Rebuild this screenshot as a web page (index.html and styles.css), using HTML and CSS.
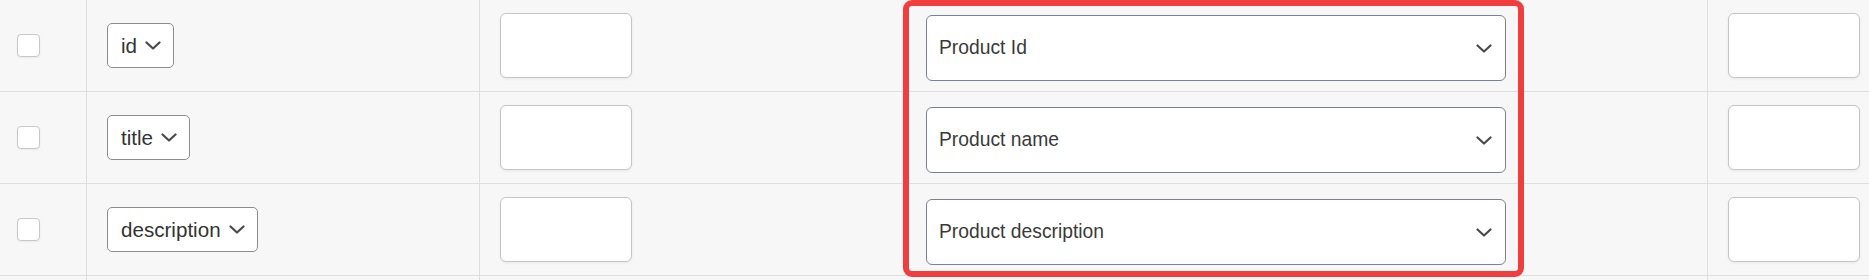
FILE: index.html
```html
<!DOCTYPE html>
<html lang="en">
<head>
    <meta charset="UTF-8">
    <meta name="viewport" content="width=device-width, initial-scale=1.0">
    <title>Field Mapping</title>
    <link rel="stylesheet" href="styles.css">
</head>
<body>
    <div class="mapping">
        <!-- Row: id -->
        <div class="row">
            <div class="cell cell-check"><span class="checkbox"></span></div>
            <div class="cell cell-field">
                <div class="pick">
                    <span>id</span>
                    <svg class="chev" width="16" height="9" viewBox="0 0 16 9"><polyline points="1.5,1.5 8,7.5 14.5,1.5"/></svg>
                </div>
            </div>
            <div class="cell cell-input"><span class="box"></span></div>
            <div class="cell cell-target">
                <div class="target">
                    <span>Product Id</span>
                    <svg class="chev" width="16" height="9" viewBox="0 0 16 9"><polyline points="1.5,1.5 8,7.5 14.5,1.5"/></svg>
                </div>
            </div>
            <div class="cell cell-empty"></div>
            <div class="cell cell-extra"><span class="box"></span></div>
        </div>

        <!-- Row: title -->
        <div class="row">
            <div class="cell cell-check"><span class="checkbox"></span></div>
            <div class="cell cell-field">
                <div class="pick">
                    <span>title</span>
                    <svg class="chev" width="16" height="9" viewBox="0 0 16 9"><polyline points="1.5,1.5 8,7.5 14.5,1.5"/></svg>
                </div>
            </div>
            <div class="cell cell-input"><span class="box"></span></div>
            <div class="cell cell-target">
                <div class="target">
                    <span>Product name</span>
                    <svg class="chev" width="16" height="9" viewBox="0 0 16 9"><polyline points="1.5,1.5 8,7.5 14.5,1.5"/></svg>
                </div>
            </div>
            <div class="cell cell-empty"></div>
            <div class="cell cell-extra"><span class="box"></span></div>
        </div>

        <!-- Row: description -->
        <div class="row">
            <div class="cell cell-check"><span class="checkbox"></span></div>
            <div class="cell cell-field">
                <div class="pick">
                    <span>description</span>
                    <svg class="chev" width="16" height="9" viewBox="0 0 16 9"><polyline points="1.5,1.5 8,7.5 14.5,1.5"/></svg>
                </div>
            </div>
            <div class="cell cell-input"><span class="box"></span></div>
            <div class="cell cell-target">
                <div class="target">
                    <span>Product description</span>
                    <svg class="chev" width="16" height="9" viewBox="0 0 16 9"><polyline points="1.5,1.5 8,7.5 14.5,1.5"/></svg>
                </div>
            </div>
            <div class="cell cell-empty"></div>
            <div class="cell cell-extra"><span class="box"></span></div>
        </div>

        <!-- Next row (cut off) -->
        <div class="row">
            <div class="cell cell-check"></div>
            <div class="cell cell-field"></div>
            <div class="cell cell-input"></div>
            <div class="cell cell-target"></div>
            <div class="cell cell-empty"></div>
            <div class="cell cell-extra"></div>
        </div>

        <!-- Highlight around target column -->
        <div class="highlight"></div>
    </div>
</body>
</html>
```

FILE: styles.css
```css
/* Reset styles */
* {
    margin: 0;
    padding: 0;
    box-sizing: border-box;
}

body {
    font-family: 'Liberation Sans', Arial, sans-serif;
    background-color: #f7f7f7;
    color: #3c3c3c;
    overflow: hidden;
}

/* Table */
.mapping {
    position: relative;
}

.row {
    display: grid;
    grid-template-columns: 86px 393px 424px 621px 183px 1fr;
    height: 92px;
    border-bottom: 1px solid #dedede;
}

.cell {
    display: flex;
    align-items: center;
    padding-left: 20px;
}

.cell-check {
    padding-left: 17px;
}

.cell-field,
.cell-input,
.cell-extra {
    border-left: 1px solid #dedede;
}

.cell-target {
    padding-left: 23px;
}

/* Checkbox */
.checkbox {
    width: 23px;
    height: 23px;
    background-color: #fff;
    border: 1px solid #c8c8c8;
    border-radius: 4px;
    box-shadow: 0 1px 2px rgba(0, 0, 0, 0.06);
}

/* Small field select */
.pick {
    display: flex;
    align-items: center;
    gap: 8px;
    height: 45px;
    padding: 0 12px 0 13px;
    background-color: #fff;
    border: 1px solid #8c8c8c;
    border-radius: 5px;
    font-size: 20.6px;
    color: #333;
}

.chev polyline {
    fill: none;
    stroke: #4a4a4a;
    stroke-width: 2.2;
    stroke-linecap: round;
    stroke-linejoin: round;
}

/* Empty input */
.box {
    width: 132px;
    height: 65px;
    background-color: #fff;
    border: 1px solid #c6c6c6;
    border-radius: 6px;
    box-shadow: 0 1px 3px rgba(0, 0, 0, 0.07);
}

/* Target select */
.target {
    display: flex;
    align-items: center;
    justify-content: space-between;
    width: 580px;
    height: 66px;
    margin-top: 5px;
    padding: 0 13px 0 12px;
    background-color: #fff;
    border: 1px solid #7b8190;
    border-radius: 6px;
    font-size: 19.3px;
    color: #3a3a3a;
}

/* Highlight frame */
.highlight {
    position: absolute;
    top: 0;
    left: 903px;
    width: 621px;
    height: 277px;
    border: 6px solid #f03e3e;
    border-radius: 9px;
    pointer-events: none;
}
```
